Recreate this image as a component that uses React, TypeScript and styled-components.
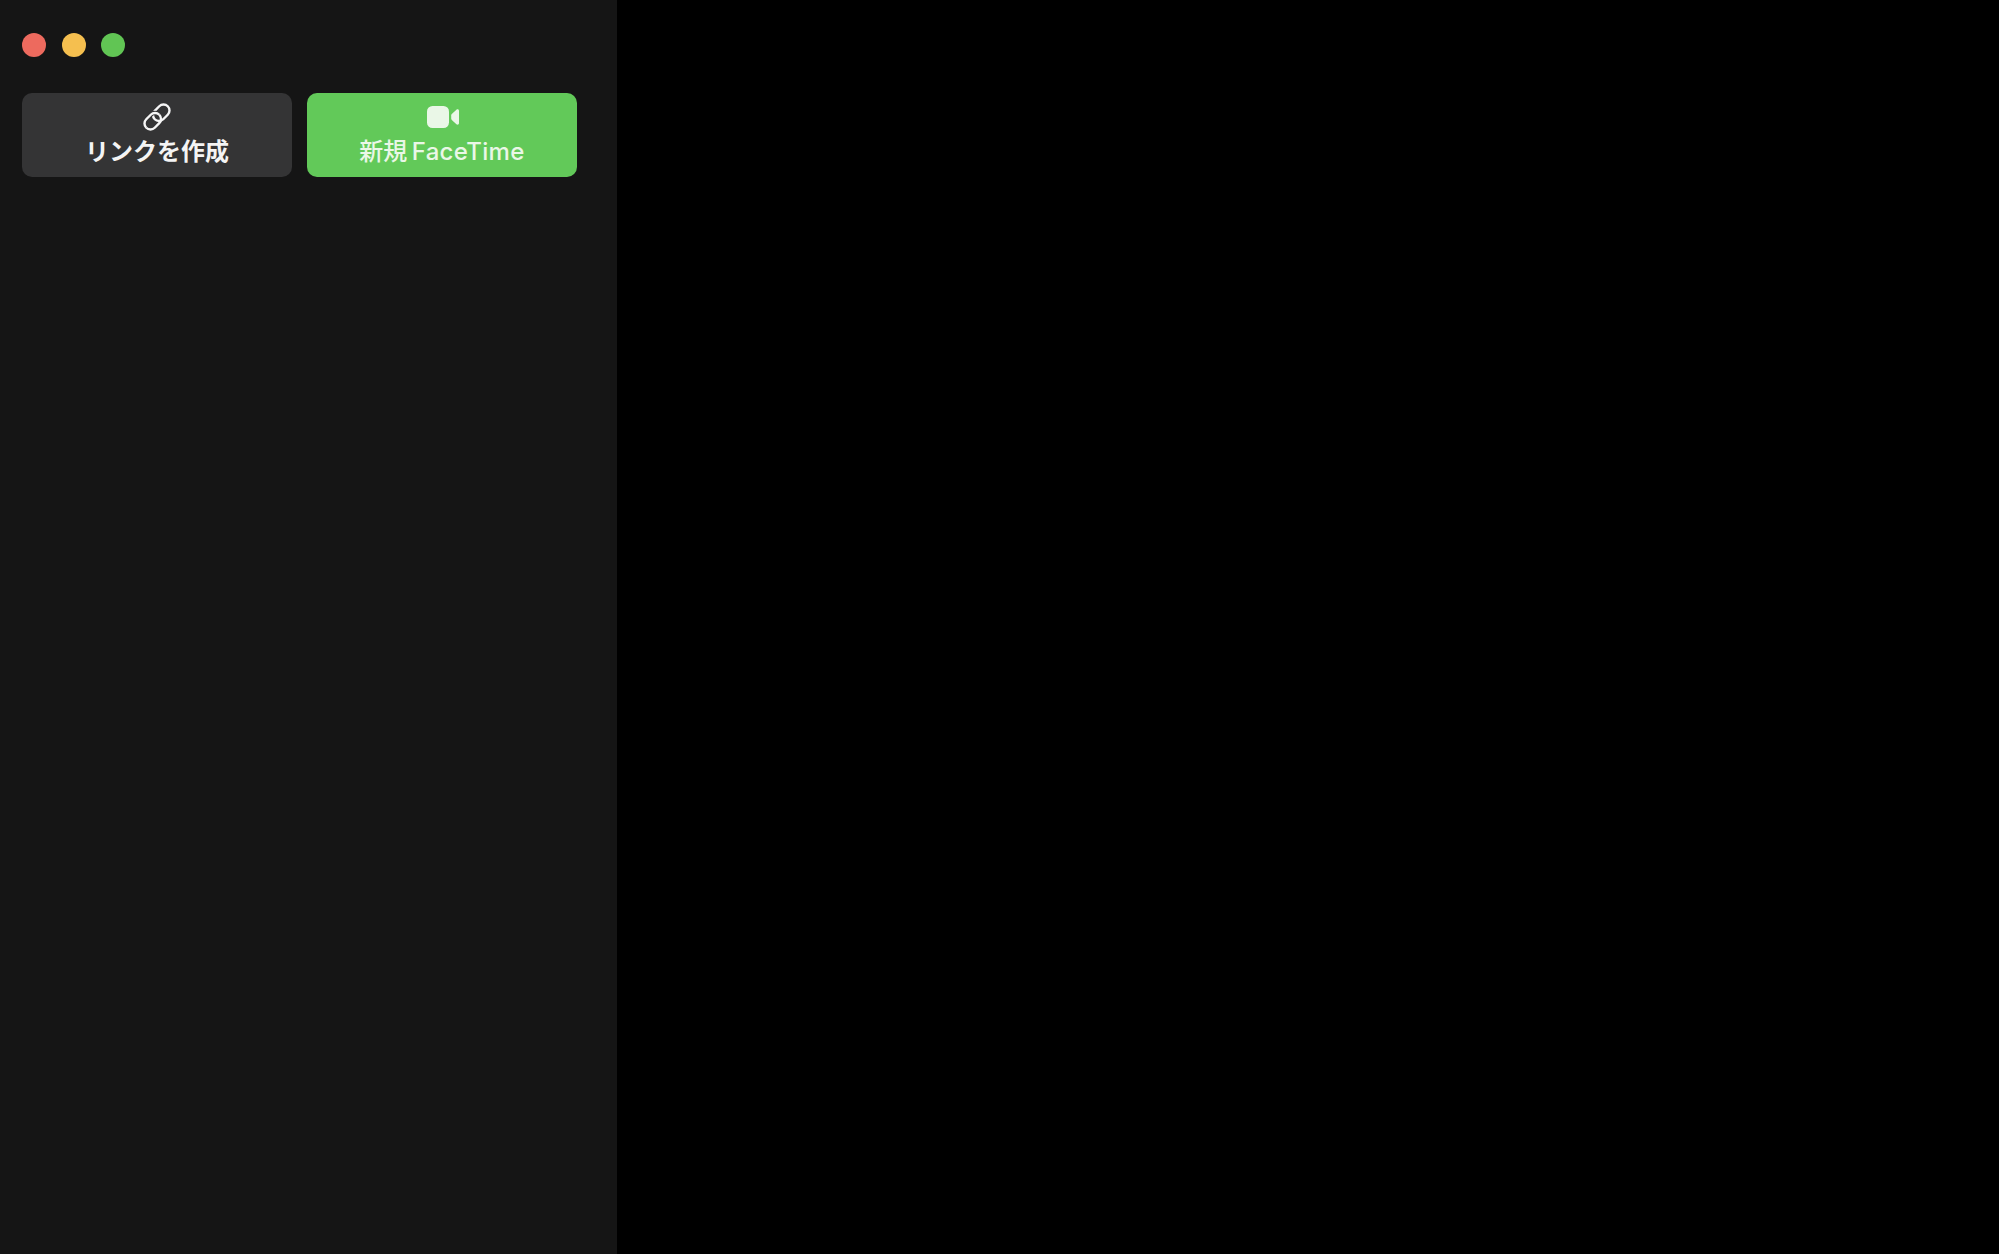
import React from "react";
import styled, { createGlobalStyle } from "styled-components";

const Global = createGlobalStyle`
  html, body { margin: 0; padding: 0; background: #000; }
  body { font-family: Inter, "Noto Sans CJK JP", "Noto Sans", sans-serif; }
  #root { height: 100vh; }
`;

const Window = styled.div`
  display: flex;
  height: 100vh;
  min-height: 1254px;
  background: #000;
  overflow: hidden;
`;

const Sidebar = styled.aside`
  width: 617px;
  flex: none;
  box-sizing: border-box;
  padding: 33px 40px 0 22px;
  background: #151515;
  display: flex;
  flex-direction: column;
  gap: 36px;
`;

const Main = styled.main`
  flex: 1;
  background: #000;
`;

const TrafficLights = styled.div`
  display: flex;
  gap: 15.5px;
`;

const Light = styled.span<{ $color: string }>`
  width: 24px;
  height: 24px;
  border-radius: 50%;
  background: ${(p) => p.$color};
`;

const Actions = styled.div`
  display: grid;
  grid-template-columns: 270px 270px;
  gap: 15px;
`;

const ActionButton = styled.button<{ $primary?: boolean }>`
  height: 84px;
  padding: 9px 0 0;
  border: 0;
  border-radius: 10px;
  background: ${(p) => (p.$primary ? "#62c959" : "#343435")};
  color: ${(p) => (p.$primary ? "#eaf7e7" : "#f4f4f4")};
  font-family: inherit;
  font-size: 24px;
  font-weight: ${(p) => (p.$primary ? 500 : 600)};
  line-height: 30px;
  word-spacing: -2px;
  display: flex;
  flex-direction: column;
  align-items: center;
  gap: 5px;
  box-sizing: border-box;
`;

const Latin = styled.span`
  letter-spacing: 0.3px;
`;

const IconSlot = styled.svg`
  display: block;
  flex: none;
  overflow: visible;
`;

const LinkIcon = () => (
  <IconSlot width="30" height="30" viewBox="0 0 30 30" fill="none" aria-hidden="true">
    <g transform="rotate(-45 15 15)" strokeWidth="2.4">
      <rect x="-0.2" y="9" width="18.4" height="12" rx="6" stroke="#f6f6f6" />
      <rect x="11.8" y="9" width="18.4" height="12" rx="6" stroke="#f6f6f6" />
      <path d="M-0.2 15 A6 6 0 0 1 5.8 9 H12.2 A6 6 0 0 1 18.2 15" stroke="#343435" strokeWidth="4.6" />
      <path d="M-0.2 15 A6 6 0 0 1 5.8 9 H12.2 A6 6 0 0 1 18.2 15" stroke="#f6f6f6" />
    </g>
  </IconSlot>
);

const VideoIcon = () => (
  <IconSlot width="34" height="30" viewBox="0 0 34 30" fill="none" aria-hidden="true">
    <rect x="2" y="4" width="22" height="22" rx="5.5" fill="#eaf7e7" />
    <path
      d="M26.2 13.4 C26.2 12.8 26.4 12.4 26.8 12 L31.4 7.8 C32.6 6.8 34 7.5 34 9 V21 C34 22.5 32.6 23.2 31.4 22.2 L26.8 18 C26.4 17.6 26.2 17.2 26.2 16.6 Z"
      fill="#eaf7e7"
    />
  </IconSlot>
);

export default function App() {
  return (
    <>
      <Global />
      <Window>
        <Sidebar>
          <TrafficLights>
            <Light $color="#ed6a5e" />
            <Light $color="#f5bf4f" />
            <Light $color="#61c554" />
          </TrafficLights>
          <Actions>
            <ActionButton>
              <LinkIcon />
              リンクを作成
            </ActionButton>
            <ActionButton $primary>
              <VideoIcon />
              <span>
                新規 <Latin>FaceTime</Latin>
              </span>
            </ActionButton>
          </Actions>
        </Sidebar>
        <Main />
      </Window>
    </>
  );
}
